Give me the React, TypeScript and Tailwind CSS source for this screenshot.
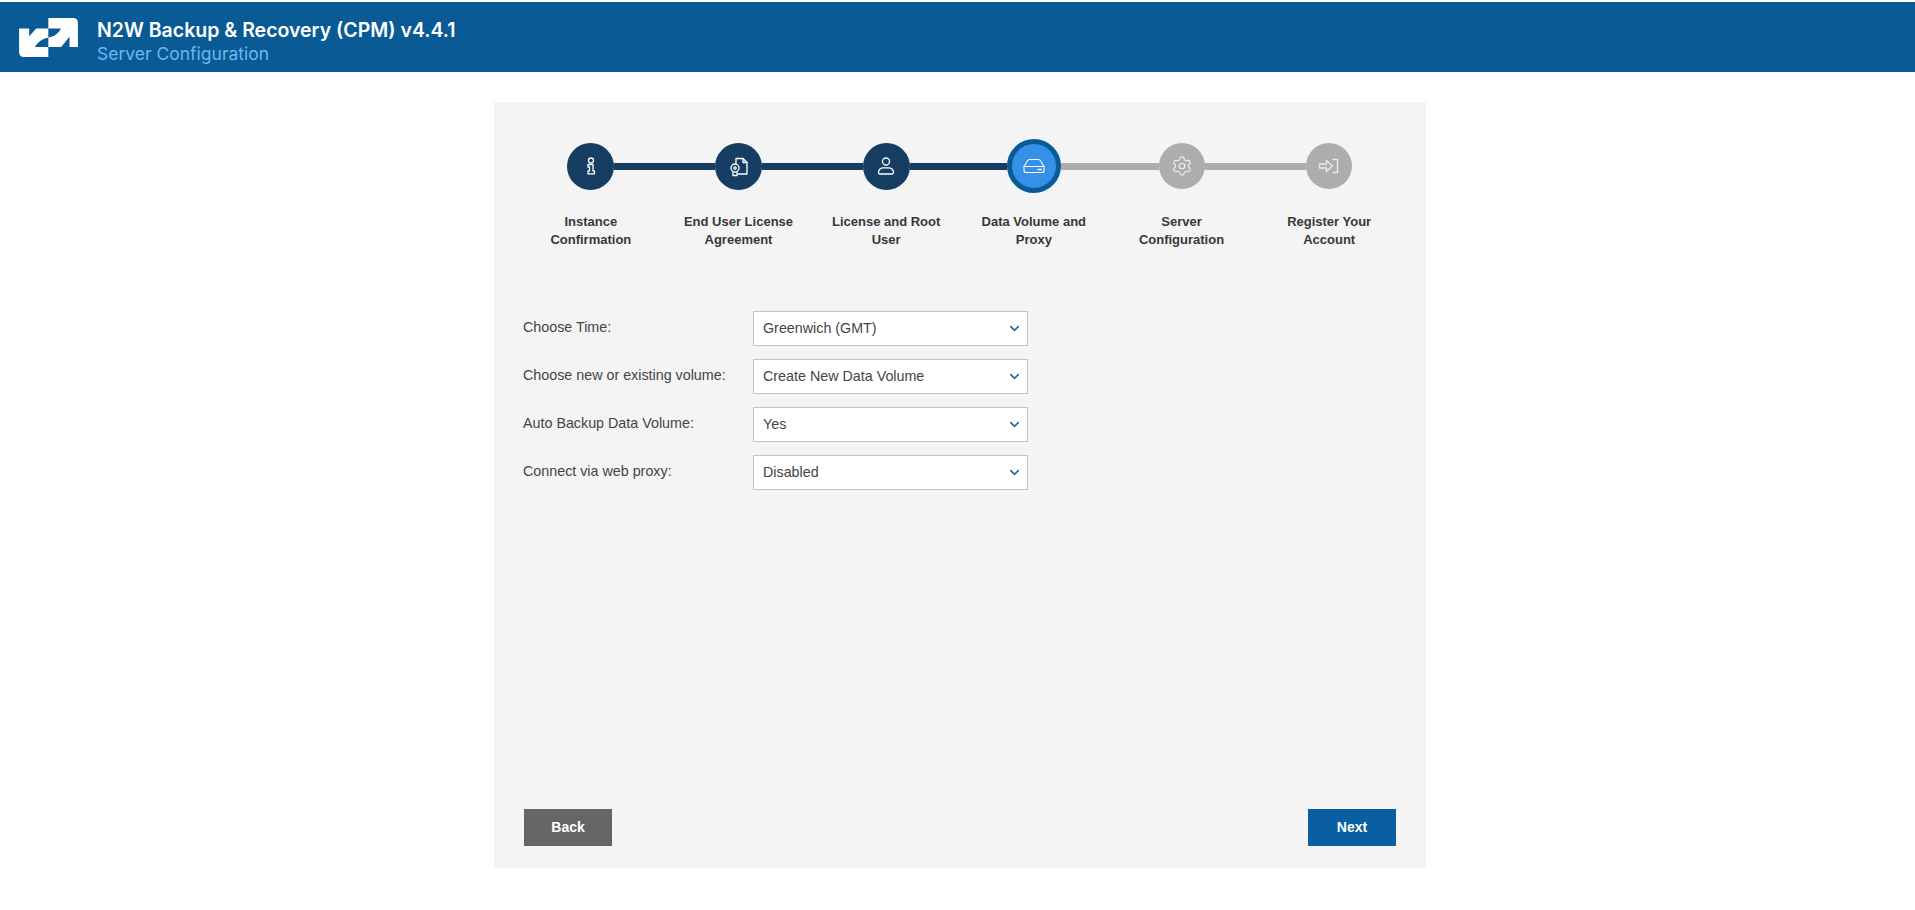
import { ChevronDown, Settings } from 'lucide-react'

const steps = [
  { lines: ['Instance', 'Confirmation'], state: 'done' },
  { lines: ['End User License', 'Agreement'], state: 'done' },
  { lines: ['License and Root', 'User'], state: 'done' },
  { lines: ['Data Volume and', 'Proxy'], state: 'active' },
  { lines: ['Server', 'Configuration'], state: 'todo' },
  { lines: ['Register Your', 'Account'], state: 'todo' },
]

const fields = [
  { label: 'Choose Time:', value: 'Greenwich (GMT)' },
  { label: 'Choose new or existing volume:', value: 'Create New Data Volume' },
  { label: 'Auto Backup Data Volume:', value: 'Yes' },
  { label: 'Connect via web proxy:', value: 'Disabled' },
]

const Logo = () => (
  <svg width="59" height="39" viewBox="15 14 175 116" fill="#fff" className="mt-[1px] shrink-0">
    <path d="M15 45H45V68L66 45H102V72Q75 78 62 100H102V130H30Q15 130 15 115Z" />
    <path d="M102 14H175Q190 14 190 30V100H165V70L140 100H102V72Q128 68 140 45H102Z" />
  </svg>
)

const StepIcon = ({ index }: { index: number }) => {
  const common = {
    width: 22,
    height: 22,
    viewBox: '0 0 22 22',
    fill: 'none',
    stroke: 'currentColor',
    strokeWidth: 1.3,
    strokeLinejoin: 'round' as const,
    strokeLinecap: 'round' as const,
  }
  if (index === 0)
    return (
      <svg {...common}>
        <circle cx="11" cy="5.500" r="2.500" />
        <path d="M8 9.500H13V16H14.500V18.800H8V16H9.500V12H8Z" />
      </svg>
    )
  if (index === 1)
    return (
      <svg {...common}>
        <path d="M8 8V3.500H15L19 7.500V19H10" />
        <path d="M15 3.500V7.500H19" />
        <circle cx="7" cy="13" r="4" />
        <circle cx="7" cy="13" r="1.200" />
        <path d="M5 17V20.500H9V17" />
      </svg>
    )
  if (index === 2)
    return (
      <svg {...common}>
        <circle cx="11" cy="6.500" r="3.500" />
        <path d="M3.500 17.500C3.500 14.500 6 12.800 8 12.800H14C16 12.800 18.500 14.500 18.500 17.500C18.500 18.500 18 19 17 19H5C4 19 3.500 18.500 3.500 17.500Z" />
      </svg>
    )
  if (index === 3)
    return (
      <svg {...common} width={24} height={24} viewBox="0 0 24 24" strokeWidth={1.100}>
        <path d="M2 12.500L5.500 6.800C6 6 6.500 5.500 7.500 5.500H16.500C17.500 5.500 18 6 18.500 6.800L22 12.500V16.500C22 17.800 21.300 18.500 20 18.500H4C2.700 18.500 2 17.800 2 16.500Z" />
        <path d="M2 12.500H22" />
        <path d="M16 15.500H19" strokeWidth={1.500} />
      </svg>
    )
  if (index === 4) return <Settings size={22} strokeWidth={1.300} className="text-[#eeeeee]" />
  return (
    <svg {...common} stroke="#ededed">
      <path d="M1.500 9H8.500V5.500L14.500 11L8.500 16.500V13H1.500Z" />
      <path d="M15 4.500H19.500V17.500H15" />
    </svg>
  )
}

const Step = ({ index, lines, state }: { index: number; lines: string[]; state: string }) => {
  const leftBar = index === 0 ? 'bg-transparent' : state === 'todo' ? 'bg-[#adadad]' : 'bg-[#153e62]'
  const rightBar = index === 5 ? 'bg-transparent' : state === 'done' ? 'bg-[#153e62]' : 'bg-[#adadad]'
  const circle =
    state === 'active'
      ? 'w-[54px] h-[54px] bg-[#3590e8] border-[5px] border-[#0a5a96] text-white'
      : state === 'done'
        ? 'w-[47px] h-[47px] bg-[#153e62] text-white'
        : 'w-[46px] h-[46px] bg-[#adadad] text-white'
  return (
    <div className="flex flex-col items-center">
      <div className="flex items-center w-full h-[54px]">
        <div className={`flex-1 h-[7px] ${leftBar}`} />
        <div className={`flex items-center justify-center rounded-full shrink-0 ${circle}`}>
          <StepIcon index={index} />
        </div>
        <div className={`flex-1 h-[7px] ${rightBar}`} />
      </div>
      <div className="mt-[20px] text-center text-[13px] leading-[18px] font-bold text-[#383838]">
        {lines.map((line) => (
          <div key={line}>{line}</div>
        ))}
      </div>
    </div>
  )
}

const App = () => {
  return (
    <div className="min-h-[910px] bg-white font-['Liberation_Sans',Arial,sans-serif]">
      <div className="mt-[2px] h-[70px] bg-[#0a5a96] flex items-center pl-[19px]">
        <Logo />
        <div className="ml-[19px] pt-[7px] font-['Inter',sans-serif]">
          <div className="text-[19.500px] leading-[26px] font-semibold text-white">N2W Backup &amp; Recovery (CPM) v4.4.1</div>
          <div className="text-[17.500px] leading-[22px] text-[#6fb6f2]">Server Configuration</div>
        </div>
      </div>

      <div className="flex justify-center pl-[5px] pt-[30px]">
        <div className="w-[932px] h-[766px] bg-[#f4f4f4] flex flex-col">
          <div className="grid grid-cols-6 px-[23px] pt-[37px]">
            {steps.map((step, i) => (
              <Step key={i} index={i} lines={step.lines} state={step.state} />
            ))}
          </div>

          <div className="mt-[62px] pl-[29px] flex flex-col gap-[13px]">
            {fields.map((field) => (
              <div key={field.label} className="flex items-center h-[35px]">
                <label className="w-[230px] text-[14.300px] text-[#444444] -translate-y-[1px]">{field.label}</label>
                <div className="relative w-[275px]">
                  <select className="w-full h-[35px] pl-[9px] appearance-none bg-white border border-[#c4c4c4] text-[14.300px] text-[#444444] outline-none">
                    <option>{field.value}</option>
                  </select>
                  <ChevronDown
                    size={15}
                    strokeWidth={2.500}
                    className="absolute right-[6px] top-[10px] text-[#1f6aa5] pointer-events-none"
                  />
                </div>
              </div>
            ))}
          </div>

          <div className="mt-auto mb-[22px] px-[30px] flex justify-between">
            <button className="w-[88px] h-[37px] bg-[#666666] text-white text-[14px] font-bold">Back</button>
            <button className="w-[88px] h-[37px] bg-[#0a5fa3] text-white text-[14px] font-bold">Next</button>
          </div>
        </div>
      </div>
    </div>
  )
}

export default App
